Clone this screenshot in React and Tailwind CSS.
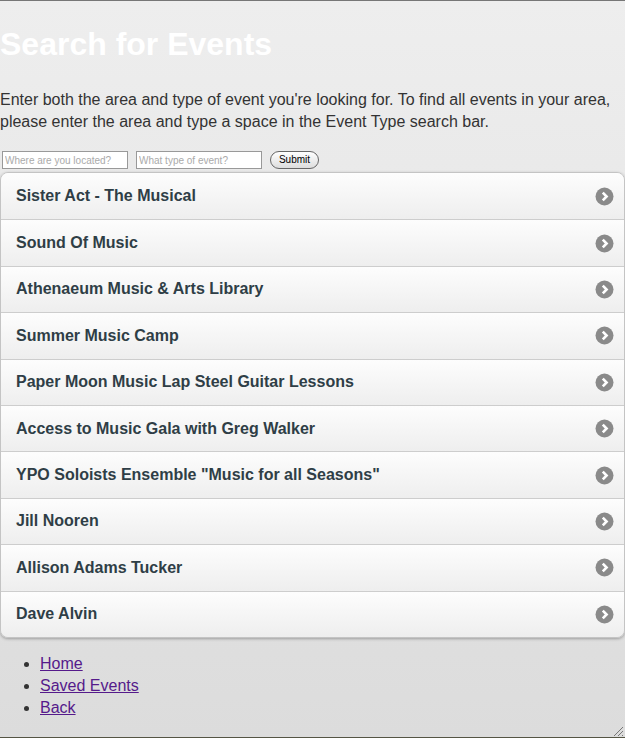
// App.jsx — event search page
const events = [
  "Sister Act - The Musical",
  "Sound Of Music",
  "Athenaeum Music & Arts Library",
  "Summer Music Camp",
  "Paper Moon Music Lap Steel Guitar Lessons",
  "Access to Music Gala with Greg Walker",
  'YPO Soloists Ensemble "Music for all Seasons"',
  "Jill Nooren",
  "Allison Adams Tucker",
  "Dave Alvin",
];

function Chevron() {
  return (
    <svg width="19" height="19" viewBox="0 0 19 19">
      <circle cx="9.5" cy="9.5" r="9" fill="#8a8a8a" />
      <path d="M7.8 5.6 L11.6 9.5 L7.8 13.4" fill="none" stroke="#fff" strokeWidth="2.6" />
    </svg>
  );
}

export default function App() {
  return (
    <div
      className="relative h-[738px] w-[625px] overflow-hidden border-t border-[#777] bg-gradient-to-b from-[#eeeeee] to-[#dcdcdc] text-[#333]"
      style={{ fontFamily: '"Liberation Sans", Arial, sans-serif' }}
    >
      <h1 className="mt-[26px] text-[32px] font-bold leading-[34px] text-white">Search for Events</h1>

      <p className="mt-[28px] text-[16px] leading-[22px] text-[#333]">
        Enter both the area and type of event you're looking for. To find all events in your area,
        please enter the area and type a space in the Event Type search bar.
      </p>

      {/* Formularul de căutare */}
      <div className="mt-[18px] flex items-center pl-[2px]">
        <input
          placeholder="Where are you located?"
          className="h-[18px] w-[126px] border border-[#999] bg-white px-[2px] text-[10px] placeholder:text-[#aaa]"
        />
        <input
          placeholder="What type of event?"
          className="ml-[8px] h-[18px] w-[126px] border border-[#999] bg-white px-[2px] text-[10px] placeholder:text-[#aaa]"
        />
        <button className="ml-[8px] h-[18px] w-[49px] rounded-full border border-[#666] bg-gradient-to-b from-white to-[#ddd] text-[10px] leading-none text-black">
          Submit
        </button>
      </div>

      {/* Lista de evenimente */}
      <ul className="mt-[3px] overflow-hidden rounded-[8px] border border-[#c4c4c4] shadow-[0_1px_3px_rgba(0,0,0,0.3)]">
        {events.map((ev, i) => (
          <li
            key={ev}
            className={`flex h-[46.4px] items-center justify-between bg-gradient-to-b from-[#fdfdfd] to-[#eeeeee] pl-[15px] pr-[10px] ${
              i > 0 ? "border-t border-[#cdcdcd]" : ""
            }`}
          >
            <span className="text-[16px] font-bold text-[#2f3e46]">{ev}</span>
            <Chevron />
          </li>
        ))}
      </ul>

      {/* Linkuri jos */}
      <ul className="mt-[15px] list-disc pl-[40px] text-[16px] leading-[22px] text-[#333]">
        <li><a href="#" className="text-[#551a8b] underline">Home</a></li>
        <li><a href="#" className="text-[#551a8b] underline">Saved Events</a></li>
        <li><a href="#" className="text-[#551a8b] underline">Back</a></li>
      </ul>

      {/* Mâner de redimensionare */}
      <svg className="absolute bottom-[1px] right-[1px]" width="12" height="12" viewBox="0 0 12 12">
        <path d="M11 2 L2 11 M11 6 L6 11 M11 10 L10 11" stroke="#777" strokeWidth="1" />
      </svg>
      <div className="absolute bottom-0 left-0 h-[1px] w-full bg-[#555544]" />
    </div>
  );
}
